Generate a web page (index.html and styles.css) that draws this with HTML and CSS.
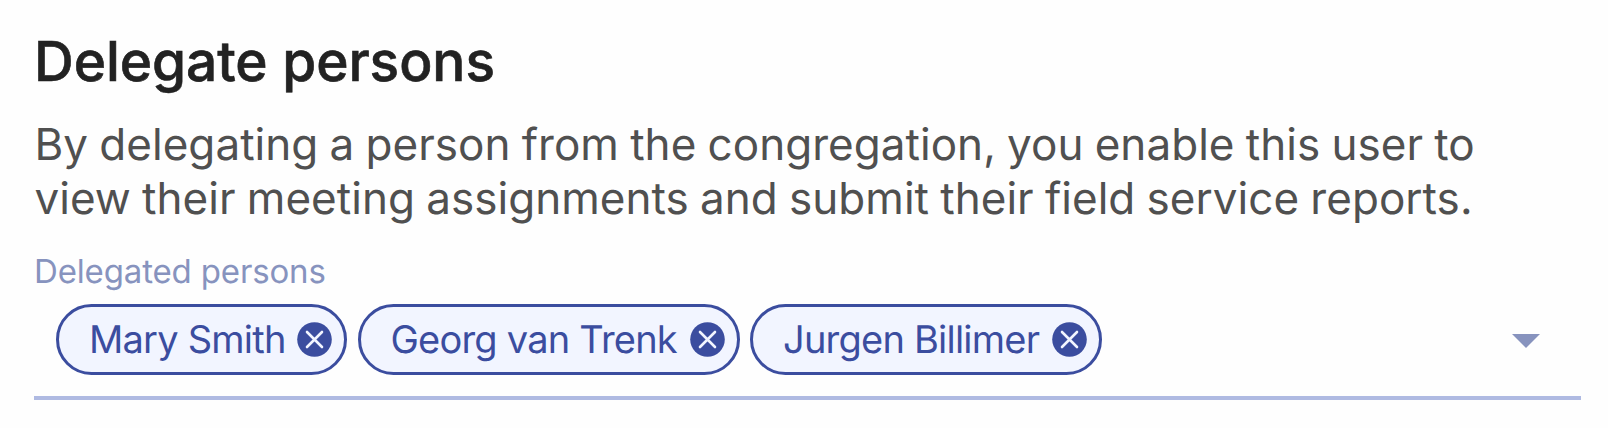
FILE: index.html
```html
<!DOCTYPE html>
<html lang="en">
<head>
<meta charset="utf-8">
<title>Delegate persons</title>
<link rel="stylesheet" href="styles.css">
</head>
<body>
<main class="section">
<h1 class="title">Delegate persons</h1>
<p class="description">By delegating a person from the congregation, you enable this user to<br>view their meeting assignments and submit their field service reports.</p>
<div class="field">
<div class="label">Delegated persons</div>
<div class="control">
<div class="chips">
<div class="chip mary"><span>Mary Smith</span><svg class="remove" viewBox="0 0 35 35"><circle cx="17.5" cy="17.5" r="17.3"/><path d="M10 10 25 25M25 10 10 25"/></svg></div>
<div class="chip georg"><span>Georg van Trenk</span><svg class="remove" viewBox="0 0 35 35"><circle cx="17.5" cy="17.5" r="17.3"/><path d="M10 10 25 25M25 10 10 25"/></svg></div>
<div class="chip jurgen"><span>Jurgen Billimer</span><svg class="remove" viewBox="0 0 35 35"><circle cx="17.5" cy="17.5" r="17.3"/><path d="M10 10 25 25M25 10 10 25"/></svg></div>
</div>
<svg class="arrow" viewBox="0 0 28 14"><path d="M0 0H28L14 14Z"/></svg>
</div>
</div>
</main>
</body>
</html>
```
FILE: styles.css
```css
* { box-sizing: border-box; }
body { margin: 0; background: #fefefe; font-family: Inter, sans-serif; text-rendering: geometricPrecision; }
.section { width: 1608px; height: 428px; padding: 30px 27px 0 34px; overflow: hidden; }
.title { margin: 0; font-size: 55px; line-height: 64px; font-weight: 500; letter-spacing: -.05px; color: #222; -webkit-text-stroke: .6px #222; white-space: nowrap; }
.description { margin: 23px 0 0; padding-left: .5px; font-size: 44px; line-height: 54.4px; letter-spacing: .04px; word-spacing: -1.2px; color: #505050; white-space: nowrap; }
.field { margin-top: 25px; }
.label { font-size: 33px; line-height: 40px; letter-spacing: -.15px; color: #8793be; white-space: nowrap; }
.control { display: flex; align-items: flex-start; justify-content: space-between; height: 109px; padding: 13px 41px 0 22px; border-bottom: 4px solid #afbae2; }
.chips { display: flex; gap: 10.5px; }
.chip { display: flex; align-items: center; justify-content: space-between; height: 71px; padding: 0 12px 0 30px; border: 3px solid #3b4d9f; border-radius: 36px; background: #f2f5ff; color: #3b4d9f; font-size: 38px; line-height: 46px; letter-spacing: -.78px; white-space: nowrap; }
.chip span { margin-top: 2px; }
.mary { width: 291px; }
.georg { width: 382px; }
.jurgen { width: 351.5px; }
.remove { width: 35px; height: 35px; flex: none; fill: #3b4d9f; stroke: none; }
.remove path { stroke: #f2f5ff; stroke-width: 2.6; stroke-linecap: round; }
.arrow { width: 28px; height: 14px; margin-top: 30px; fill: #8793be; }
```
